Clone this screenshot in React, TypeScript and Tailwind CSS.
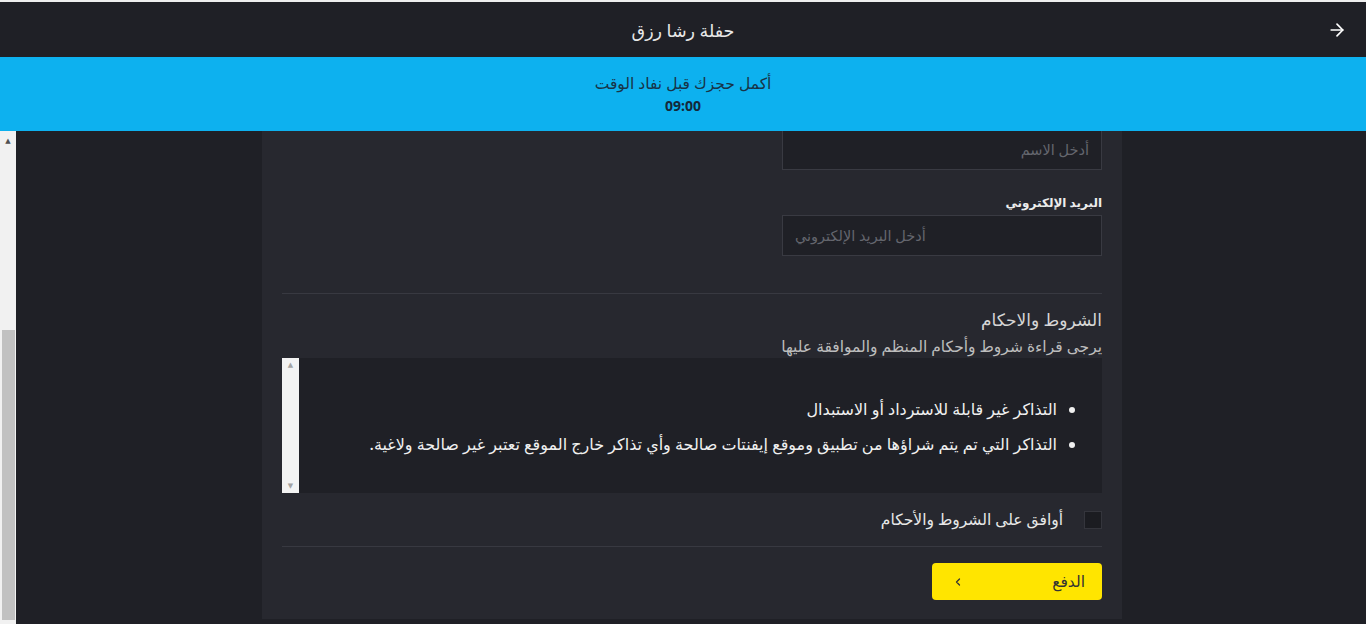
import { ArrowRight, ChevronLeft } from 'lucide-react';

const terms = [
    'التذاكر غير قابلة للاسترداد أو الاستبدال',
    'التذاكر التي تم يتم شراؤها من تطبيق وموقع إيفنتات صالحة وأي تذاكر خارج الموقع تعتبر غير صالحة ولاغية.',
];

export default function App() {
    return (
        <div
            dir="rtl"
            className="h-[624px] w-full flex flex-col overflow-hidden bg-[#1f2026]"
            style={{ fontFamily: '"Noto Sans", "DejaVu Sans", sans-serif' }}
        >
            <div className="h-[2px] bg-[#eeeeee] shrink-0" />

            {/* Header */}
            <header className="h-[55px] shrink-0 relative flex items-center justify-center bg-[#1f2026]">
                <h1 className="text-[17.5px] leading-[24px] text-[#e8e8e8]">حفلة رشا رزق</h1>
                <button className="absolute right-[19px] top-1/2 -translate-y-1/2 text-white">
                    <ArrowRight size={20} strokeWidth={2} />
                </button>
            </header>

            {/* Timer banner */}
            <div className="h-[74px] shrink-0 bg-[#0db1ef] flex flex-col items-center justify-center gap-[1px]">
                <p className="text-[15.5px] leading-[22px] text-[#183447]">أكمل حجزك قبل نفاد الوقت</p>
                <p className="text-[14px] leading-[22px] font-bold text-[#14283a]" dir="ltr">09:00</p>
            </div>

            {/* Scrolling body */}
            <div className="flex-1 flex min-h-0">
                <main className="flex-1 flex flex-col justify-end overflow-hidden">
                    <div className="shrink-0 pb-[5px] pt-[20px] pl-[2px]">
                        <div className="w-[860px] mx-auto bg-[#27282f] px-5 pt-6 pb-[19px]">
                            <h2 className="text-[17px] text-[#d8d8d8] mb-4">معلومات الحجز</h2>
                            <div className="flex flex-col gap-[2px] mb-4">
                                <span className="text-[12px] leading-[20px] font-semibold text-[#ececec]">رقم الهاتف</span>
                                <div className="w-[320px] h-[41px] border border-[#393a42] bg-[#1f2026] flex items-center px-3 text-[14.5px] text-[#64666e]">أدخل رقم الهاتف</div>
                            </div>
                            <div className="flex flex-col gap-[2px] mb-4">
                                <span className="text-[12px] leading-[20px] font-semibold text-[#ececec]">الاسم</span>
                                <div className="w-[320px] h-[41px] border border-[#393a42] bg-[#1f2026] flex items-center px-3 text-[14.5px] text-[#64666e]">أدخل الاسم</div>
                            </div>
                            <div className="flex flex-col gap-[2px] pt-[7px]">
                                <span className="text-[12px] leading-[20px] font-semibold text-[#ececec]">البريد الإلكتروني</span>
                                <div dir="ltr" className="w-[320px] h-[41px] border border-[#393a42] bg-[#1f2026] flex items-center px-3 text-[14.5px] text-[#64666e]">
                                    <span dir="rtl">أدخل البريد الإلكتروني</span>
                                </div>
                            </div>

                            <div className="h-px bg-[#383941] mt-[37px]" />

                            {/* Terms */}
                            <h3 className="text-[17px] leading-[24px] text-[#d6d6d6] mt-[14px]">الشروط والاحكام</h3>
                            <p className="text-[15.5px] leading-[20px] text-[#bdbdbd] mt-[4px]">يرجى قراءة شروط وأحكام المنظم والموافقة عليها</p>

                            <div className="h-[135px] mt-[2px] flex bg-[#1f2026]">
                                <ul className="flex-1 list-disc pr-[45px] pt-[40px] text-[16px] leading-[22px] text-[#f0f0f0] font-medium">
                                    {terms.map((t) => (
                                        <li key={t} className="mb-[13px]">{t}</li>
                                    ))}
                                </ul>
                                <div className="w-[17px] bg-[#f3f3f3] flex flex-col justify-between items-center py-[2px] text-[7px] text-[#a3a3a3]">
                                    <span>▲</span>
                                    <span>▼</span>
                                </div>
                            </div>

                            <label className="flex items-center gap-[21px] h-[53px]">
                                <span className="w-[18px] h-[18px] bg-[#1b1c21] border border-[#34353c] shrink-0" />
                                <span className="text-[15.5px] text-[#e8e8e8]">أوافق على الشروط والأحكام</span>
                            </label>

                            <div className="h-px bg-[#383941]" />

                            <button className="mt-[16px] w-[170px] h-[37px] rounded-[4px] bg-[#ffe500] flex items-center justify-between pr-[17px] pl-[20px] text-[15.5px] text-[#333333]">
                                <span>الدفع</span>
                                <ChevronLeft size={12} strokeWidth={2.5} />
                            </button>
                        </div>
                    </div>
                </main>

                {/* page scrollbar */}
                <div className="w-[16px] shrink-0 bg-[#f1f1f1] flex flex-col items-center">
                    <span className="text-[7px] leading-none text-[#505050] mt-[6px]">▲</span>
                    <div className="w-[13px] h-[290px] bg-[#c1c1c1] mt-auto mb-[4px]" />
                </div>
            </div>
        </div>
    );
}
